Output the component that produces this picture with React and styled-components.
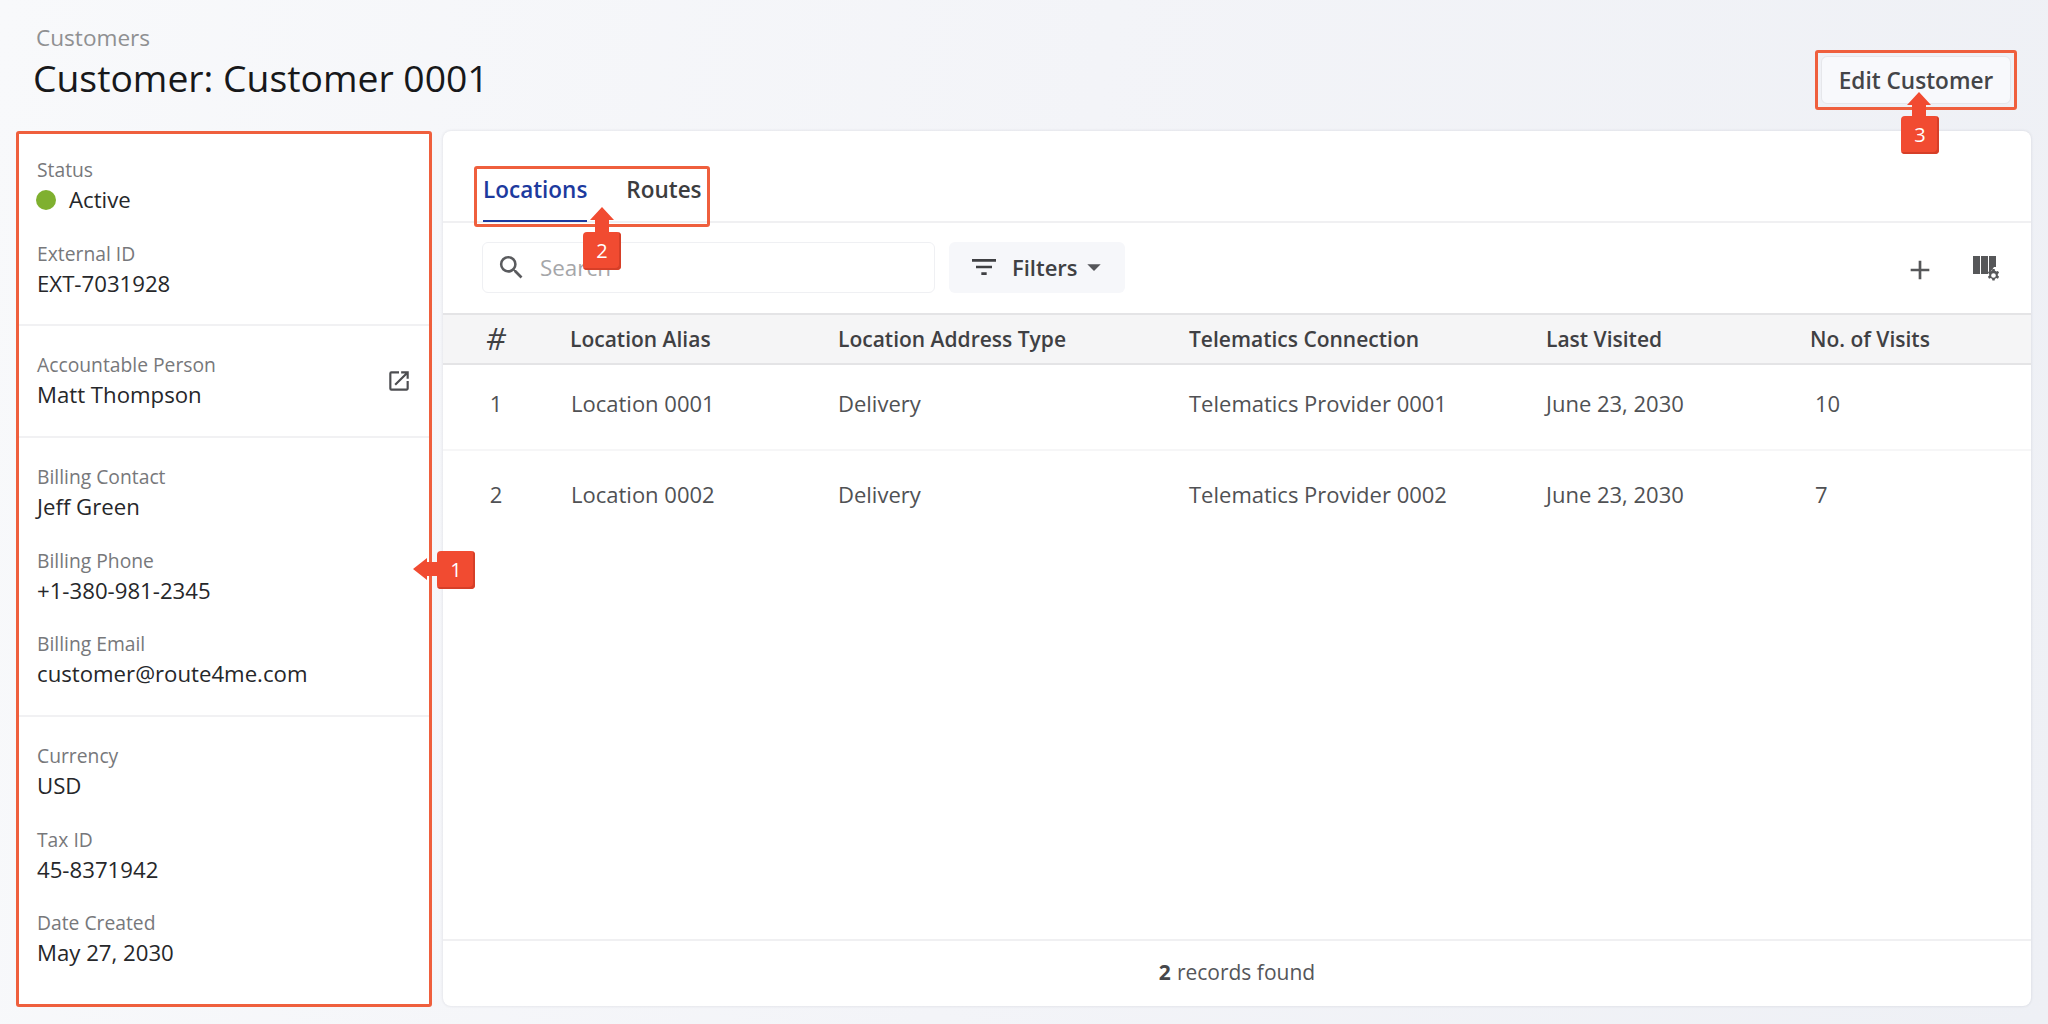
import React from "react";
import styled, { createGlobalStyle } from "styled-components";
import { MdSearch, MdFilterList, MdOpenInNew, MdAdd, MdArrowDropDown } from "react-icons/md";

const Global = createGlobalStyle`
  html, body { margin: 0; padding: 0; }
  body { width: 2048px; height: 1024px; overflow: hidden; font-family: "Open Sans", "Noto Sans", sans-serif; color: #2b2b2d; }
`;

const Page = styled.div`
  position: relative;
  width: 2048px;
  height: 1024px;
  box-sizing: border-box;
  padding: 0 17px 18px 17px;
  display: flex;
  flex-direction: column;
  background: linear-gradient(100deg, #f8f9fb 0%, #f3f4f8 50%, #eef0f5 100%);
`;

const Header = styled.header`
  height: 131px;
  flex: none;
  display: flex;
  justify-content: space-between;
  align-items: flex-start;
`;

const Heading = styled.div`
  padding: 24px 0 0 16px;
`;

const Crumb = styled.div`
  font-size: 22.6px;
  line-height: 28px;
  color: #8f9092;
  padding-left: 3px;
`;

const Title = styled.h1`
  margin: 0;
  font-size: 37.3px;
  line-height: 52px;
  font-weight: 400;
  color: #17181a;
`;

const EditButton = styled.button`
  margin: 56px 20px 0 0;
  width: 190px;
  height: 48px;
  padding: 0;
  border: 1px solid #e6e7eb;
  border-radius: 6px;
  background: #f8f9fc;
  font: 600 22.6px "Open Sans", sans-serif;
  color: #444548;
`;

const Body = styled.main`
  flex: 1;
  display: flex;
  gap: 11px;
  min-height: 0;
`;

const Panel = styled.aside`
  width: 415px;
  flex: none;
  box-sizing: border-box;
  background: #fff;
  border-radius: 6px;
`;

const Section = styled.section`
  padding: 26px 20px 23.8px;
  display: flex;
  flex-direction: column;
  gap: 23.6px;
  & + & { border-top: 2px solid #f1f1f3; }
`;

const Item = styled.div`
  position: relative;
  height: 60px;
`;

const Label = styled.div`
  font-size: 19.3px;
  line-height: 26px;
  color: #77787b;
`;

const Value = styled.div`
  font-size: 22.2px;
  line-height: 33.5px;
  color: #26272a;
  display: flex;
  align-items: center;
  gap: 13px;
`;

const StatusDot = styled.span`
  width: 20px;
  height: 20px;
  margin-left: -1px;
  border-radius: 50%;
  background: #7fb02f;
`;

const LinkIcon = styled(MdOpenInNew)`
  position: absolute;
  right: 0;
  top: 16px;
  font-size: 26px;
  color: #4d4e51;
`;

const Card = styled.div`
  flex: 1;
  display: flex;
  flex-direction: column;
  background: #fff;
  border-radius: 8px;
  box-shadow: 0 0 3px rgba(40, 44, 70, 0.14);
  overflow: hidden;
`;

const Tabs = styled.nav`
  height: 92px;
  flex: none;
  box-sizing: border-box;
  border-bottom: 2px solid #f0f0f2;
  display: flex;
  align-items: flex-end;
  gap: 39px;
  padding-left: 40px;
`;

const Tab = styled.div`
  height: 57px;
  margin-bottom: -1px;
  box-sizing: border-box;
  font-size: 22.5px;
  font-weight: 600;
  line-height: 49px;
  color: ${(p) => (p.$active ? "#1d3a9e" : "#3c3d40")};
  border-bottom: 2px solid ${(p) => (p.$active ? "#1d3a9e" : "transparent")};
`;

const Toolbar = styled.div`
  height: 90px;
  flex: none;
  box-sizing: border-box;
  display: flex;
  align-items: center;
  gap: 14px;
  padding: 0 27px 2px 39px;
`;

const SearchBox = styled.div`
  width: 453px;
  height: 51px;
  box-sizing: border-box;
  border: 1px solid #eff0f3;
  border-radius: 6px;
  display: flex;
  align-items: center;
  gap: 13px;
  padding-left: 13px;
  font-size: 22.4px;
  color: #a5a6a9;
`;

const SearchIcon = styled(MdSearch)`
  font-size: 31px;
  color: #5a5b5e;
`;

const FilterButton = styled.div`
  width: 176px;
  height: 51px;
  box-sizing: border-box;
  background: #f6f7fa;
  border-radius: 6px;
  display: flex;
  align-items: center;
  padding-left: 19px;
  gap: 12px;
  font-size: 22px;
  font-weight: 600;
  color: #3f4043;
`;

const Caret = styled(MdArrowDropDown)`
  font-size: 32px;
  margin-left: -12px;
  color: #55565a;
`;

const ToolIcons = styled.div`
  margin-left: auto;
  display: flex;
  align-items: center;
  gap: 36px;
  margin-top: 5px;
  color: #565759;
`;

const Row = styled.div`
  display: grid;
  grid-template-columns: 127px 268px 351px 357px 264px 1fr;
  align-items: center;
  flex: none;
  box-sizing: border-box;
`;

const HeadRow = styled(Row)`
  height: 52px;
  background: #f5f5f6;
  border-top: 2px solid #e4e4e6;
  border-bottom: 2px solid #e4e4e6;
  font-size: 21px;
  font-weight: 600;
  color: #3f4043;
`;

const BodyRow = styled(Row)`
  height: 91px;
  padding-bottom: 3px;
  font-size: 22px;
  color: #505154;
  & + & { border-top: 2px solid #f6f6f7; }
  &:first-child { height: 84px; padding-bottom: 9px; }
`;

const IndexCell = styled.div`
  text-align: center;
  padding-right: 21px;
  font-size: ${(p) => (p.$head ? "31px" : "22px")};
  line-height: ${(p) => (p.$head ? "34px" : "inherit")};
  font-weight: ${(p) => (p.$head ? 400 : "inherit")};
  font-style: ${(p) => (p.$head ? "italic" : "normal")};
  margin-top: ${(p) => (p.$head ? "-2px" : "0")};
`;

const Cell = styled.div`
  padding-left: ${(p) => p.$inset || 0}px;
`;

const TableBody = styled.div`
  flex: 1;
`;

const Footer = styled.footer`
  height: 67px;
  padding-bottom: 3px;
  box-sizing: border-box;
  flex: none;
  border-top: 2px solid #f0f0f2;
  display: flex;
  align-items: center;
  justify-content: center;
  gap: 6px;
  font-size: 21px;
  color: #55565a;
  & b { font-weight: 700; color: #46474a; }
`;

const Frame = styled.div`
  position: absolute;
  box-sizing: border-box;
  left: ${(p) => p.$x}px;
  top: ${(p) => p.$y}px;
  width: ${(p) => p.$w}px;
  height: ${(p) => p.$h}px;
  border: 3px solid #ef5f3d;
  border-radius: 3px;
  pointer-events: none;
`;

const Marker = styled.div`
  position: absolute;
  left: ${(p) => p.$x}px;
  top: ${(p) => p.$y}px;
  width: 38px;
  height: 38px;
  box-sizing: border-box;
  background: #f14b31;
  border-radius: 4px;
  box-shadow: inset -2px -2px 0 #d63f28;
  color: #fff;
  font-size: 20px;
  line-height: 37px;
  text-align: center;
`;

const Arrow = styled.svg`
  position: absolute;
  left: ${(p) => p.$x}px;
  top: ${(p) => p.$y}px;
`;

const ColumnsGear = () => (
  <svg width="32" height="32" viewBox="0 0 32 32" aria-hidden="true">
    <g fill="#565759">
      <rect x="1" y="2" width="7" height="18" />
      <rect x="9" y="2" width="7" height="18" />
      <path d="M17 2h7v11h-2l-5 7z" />
      <path
        transform="translate(21.5 21.5) scale(.87) translate(-26 -23)"
        d="M24.7 15.5h2.6l.4 2a6 6 0 0 1 1.5.9l1.9-.7 1.3 2.2-1.5 1.4a6 6 0 0 1 0 1.7l1.5 1.4-1.3 2.2-1.9-.7a6 6 0 0 1-1.5.9l-.4 2h-2.6l-.4-2a6 6 0 0 1-1.5-.9l-1.9.7-1.3-2.2 1.5-1.4a6 6 0 0 1 0-1.7l-1.5-1.4 1.3-2.2 1.9.7a6 6 0 0 1 1.5-.9zM26 20.3a2.7 2.7 0 1 0 0 5.4 2.7 2.7 0 0 0 0-5.4z"
        fillRule="evenodd"
      />
    </g>
  </svg>
);

const sections = [
  [["External ID", "EXT-7031928"]],
  [["Accountable Person", "Matt Thompson", true]],
  [["Billing Contact", "Jeff Green"], ["Billing Phone", "+1-380-981-2345"], ["Billing Email", "customer@route4me.com"]],
  [["Currency", "USD"], ["Tax ID", "45-8371942"], ["Date Created", "May 27, 2030"]],
];

const rows = [
  ["1", "Location 0001", "Delivery", "Telematics Provider 0001", "June 23, 2030", "10"],
  ["2", "Location 0002", "Delivery", "Telematics Provider 0002", "June 23, 2030", "7"],
];

export default function App() {
  return (
    <Page>
      <Global />
      <Header>
        <Heading>
          <Crumb>Customers</Crumb>
          <Title>Customer: Customer 0001</Title>
        </Heading>
        <EditButton>Edit Customer</EditButton>
      </Header>
      <Body>
        <Panel>
          {sections.map((items, i) => (
            <Section key={i}>
              {i === 0 && (
                <Item>
                  <Label>Status</Label>
                  <Value>
                    <StatusDot />
                    Active
                  </Value>
                </Item>
              )}
              {items.map(([label, value, link]) => (
                <Item key={label}>
                  <Label>{label}</Label>
                  <Value>{value}</Value>
                  {link && <LinkIcon />}
                </Item>
              ))}
            </Section>
          ))}
        </Panel>
        <Card>
          <Tabs>
            <Tab $active>Locations</Tab>
            <Tab>Routes</Tab>
          </Tabs>
          <Toolbar>
            <SearchBox>
              <SearchIcon />
              Search
            </SearchBox>
            <FilterButton>
              <MdFilterList size={32} />
              Filters
              <Caret />
            </FilterButton>
            <ToolIcons>
              <MdAdd size={32} />
              <ColumnsGear />
            </ToolIcons>
          </Toolbar>
          <HeadRow>
            <IndexCell $head>#</IndexCell>
            <Cell>Location Alias</Cell>
            <Cell>Location Address Type</Cell>
            <Cell>Telematics Connection</Cell>
            <Cell>Last Visited</Cell>
            <Cell>No. of Visits</Cell>
          </HeadRow>
          <TableBody>
            {rows.map((r) => (
              <BodyRow key={r[0]}>
                <IndexCell>{r[0]}</IndexCell>
                <Cell $inset={1}>{r[1]}</Cell>
                <Cell>{r[2]}</Cell>
                <Cell>{r[3]}</Cell>
                <Cell>{r[4]}</Cell>
                <Cell $inset={5}>{r[5]}</Cell>
              </BodyRow>
            ))}
          </TableBody>
          <Footer>
            <b>2</b> records found
          </Footer>
        </Card>
      </Body>

      <Frame $x={16} $y={131} $w={416} $h={876} />
      <Frame $x={474} $y={166} $w={236} $h={61} />
      <Frame $x={1815} $y={50} $w={202} $h={60} />

      <Arrow $x={413} $y={555} width="26" height="28" viewBox="0 0 26 28">
        <path d="M0 14 L14 3 V7 H26 V21 H14 V25 Z" fill="#f14b31" />
      </Arrow>
      <Marker $x={437} $y={551}>1</Marker>
      <Arrow $x={588} $y={207} width="28" height="28" viewBox="0 0 28 28">
        <path d="M14 0 L26 13 H21 V28 H7 V13 H2 Z" fill="#f14b31" />
      </Arrow>
      <Marker $x={583} $y={232}>2</Marker>
      <Arrow $x={1905} $y={92} width="28" height="28" viewBox="0 0 28 28">
        <path d="M14 0 L26 13 H21 V28 H7 V13 H2 Z" fill="#f14b31" />
      </Arrow>
      <Marker $x={1901} $y={116}>3</Marker>
    </Page>
  );
}
